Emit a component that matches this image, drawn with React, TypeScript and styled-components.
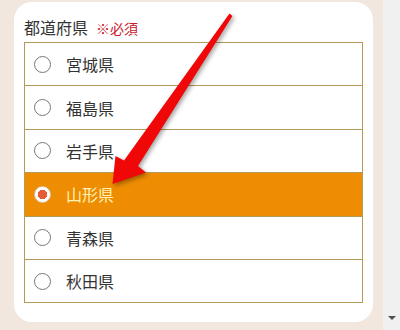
import React, { useState } from 'react'
import styled, { createGlobalStyle } from 'styled-components'

const prefectures = ['宮城県', '福島県', '岩手県', '山形県', '青森県', '秋田県']

const App: React.FC = () => {
  const [selected, setSelected] = useState('山形県')

  return (
    <>
      <GlobalStyle />
      <Page>
        <Main>
          <Card>
            <FieldLabel>
              都道府県<Required>※必須</Required>
            </FieldLabel>
            <List>
              {prefectures.map(name => (
                <Row
                  key={name}
                  $active={selected === name}
                  onClick={() => setSelected(name)}
                >
                  <Radio $active={selected === name} />
                  <RowText>{name}</RowText>
                </Row>
              ))}
            </List>
            <Arrow viewBox="0 0 400 330">
              <path
                d="M229.5 13.5 L232.5 16 L138 166 L146 172.5 L112.5 184 L115.5 156 L124 160.5 Z"
                fill="#f00808"
              />
            </Arrow>
          </Card>
        </Main>
        <Scrollbar>
          <ScrollArrow />
        </Scrollbar>
      </Page>
    </>
  )
}

export default App

// Styles
const GlobalStyle = createGlobalStyle`
  html, body {
    margin: 0;
    padding: 0;
  }
  body {
    background: #f2e7df;
    font-family: 'Noto Sans CJK JP', 'Noto Sans', sans-serif;
  }
`

const Page = styled.div`
  display: flex;
  width: 400px;
  height: 330px;
  overflow: hidden;
`

const Main = styled.div`
  flex: 1;
  padding: 2px 10px 0 14px;
`

const Card = styled.div`
  position: relative;
  height: 320px;
  box-sizing: border-box;
  background: #fff;
  border-radius: 18px;
  padding: 12px 10px 0 10px;
`

const FieldLabel = styled.div`
  font-size: 16px;
  line-height: 26px;
  color: #333;
  height: 28px;
`

const Required = styled.span`
  margin-left: 8px;
  font-size: 14px;
  color: #c8202c;
`

const List = styled.div`
  border: 1px solid #b49a58;
  border-bottom: none;
`

const Row = styled.div<{ $active: boolean }>`
  display: flex;
  align-items: center;
  height: 42.4px;
  border-bottom: 1px solid #b49a58;
  padding-left: 9px;
  background: ${p => (p.$active ? '#ee8c02' : '#fff')};
  color: ${p => (p.$active ? '#fff3b4' : '#333')};
  cursor: pointer;
`

const Radio = styled.span<{ $active: boolean }>`
  width: 17px;
  height: 17px;
  box-sizing: border-box;
  border-radius: 50%;
  border: 1px solid ${p => (p.$active ? '#d9c3a8' : '#777')};
  background: ${p =>
    p.$active
      ? 'radial-gradient(circle, #e45c35 0 4.5px, #fff 5px)'
      : '#fff'};
  flex-shrink: 0;
`

const RowText = styled.span`
  margin-left: 15px;
  font-size: 16px;
`

const Arrow = styled.svg`
  position: absolute;
  left: -14px;
  top: -2px;
  width: 400px;
  height: 330px;
  pointer-events: none;
  filter: drop-shadow(2px 2px 2px rgba(0, 0, 0, 0.35));
`

const Scrollbar = styled.div`
  width: 17px;
  background: #f0f0f0;
  display: flex;
  flex-direction: column;
  justify-content: flex-end;
  align-items: center;
  padding-bottom: 10px;
  box-sizing: border-box;
`

const ScrollArrow = styled.span`
  width: 0;
  height: 0;
  border-left: 4px solid transparent;
  border-right: 4px solid transparent;
  border-top: 4px solid #505050;
`
